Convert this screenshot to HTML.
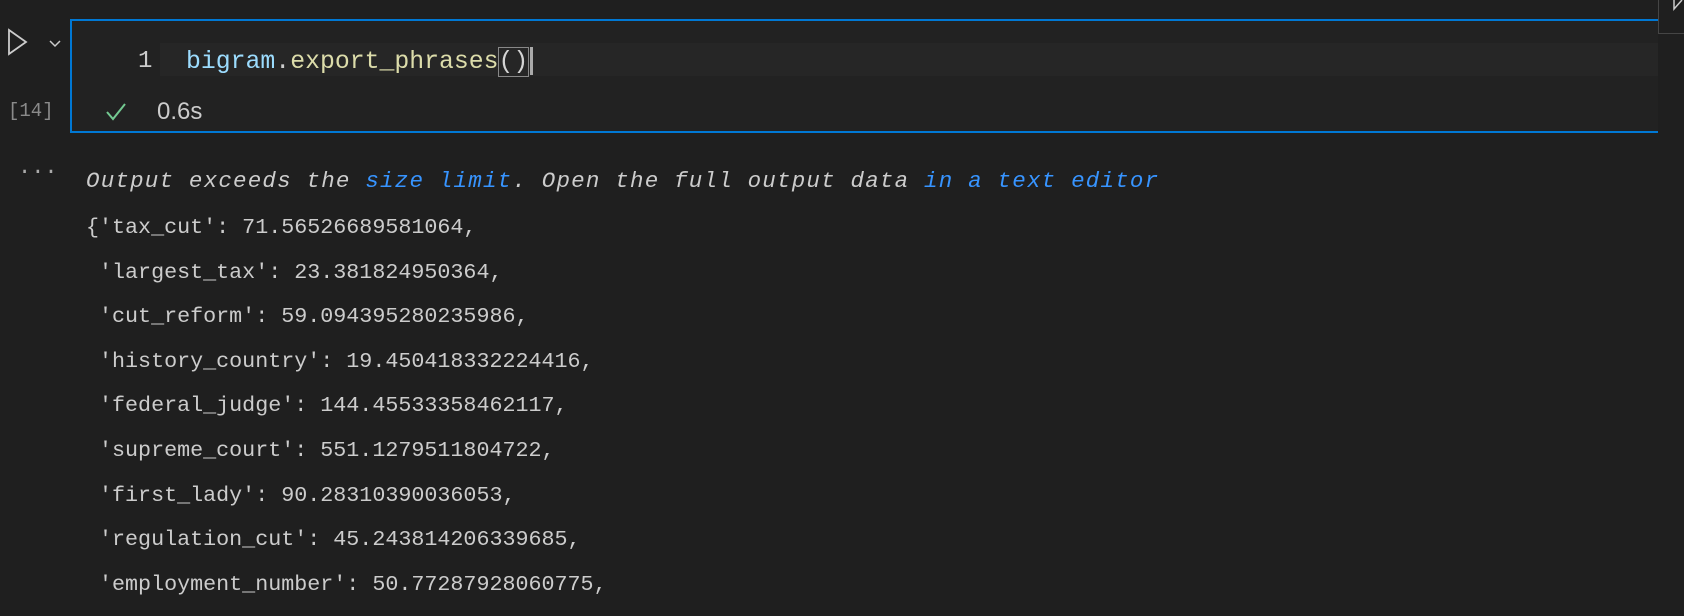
<!DOCTYPE html>
<html><head><style>
body{margin:0;width:1684px;height:616px;background:#1f1f1f;overflow:hidden;position:relative;font-family:"Liberation Sans",sans-serif;color:#ccc}
.a{position:absolute;white-space:pre}
.mono{font-family:"Liberation Mono",monospace}
</style></head><body>
<div class="a" style="left:1658px;top:-2px;width:28px;height:36px;border:1px solid #454545;box-sizing:border-box"></div>
<svg class="a" style="left:1672px;top:0" width="12" height="12"><path d="M2 0 L2 9 L10 0" fill="none" stroke="#ccc" stroke-width="1.5"/></svg>
<div class="a" style="left:70px;top:19px;width:1588px;height:114px;border:2px solid #0078d4;border-right:none;box-sizing:border-box;background:#222"></div>
<div class="a" style="left:160px;top:43px;width:1498px;height:33px;background:#262626"></div>
<svg class="a" style="left:6px;top:28px" width="60" height="30"><path d="M3 2 L3 26 L20 14 Z" fill="none" stroke="#ccc" stroke-width="1.8"/><path d="M44 13 L49 18 L54 13" fill="none" stroke="#ccc" stroke-width="1.5"/></svg>
<div class="a mono" style="left:8px;top:100px;font-size:19px;color:#8a8a8a">[14]</div>
<div class="a mono" style="left:18px;top:155px;font-size:22px;color:#aaa">...</div>
<div class="a mono" style="left:138px;top:48px;font-size:24px;color:#ccc">1</div>
<div class="a mono" style="left:186px;top:48px;font-size:24.8px;color:#dcdcaa"><span style="color:#9cdcfe">bigram</span><span style="color:#ccc">.</span>export_phrases<span style="color:#d4d4d4;outline:1px solid #888">()</span></div>
<div class="a" style="left:530px;top:47px;width:3px;height:28px;background:#aaa"></div>
<svg class="a" style="left:105px;top:101px" width="24" height="22"><path d="M2 11 L8 18 L20 3" fill="none" stroke="#73c991" stroke-width="2"/></svg>
<div class="a" style="left:157px;top:98px;font-size:24px;color:#ccc">0.6s</div>
<div class="a mono" style="left:86px;top:168px;font-size:22.5px;letter-spacing:1.2px;color:#ccc"><i>Output exceeds the <span style="color:#3794ff">size limit</span>. Open the full output data <span style="color:#3794ff">in a text editor</span></i></div>
<div class="a mono" style="left:86px;top:206px;font-size:21.7px;line-height:44.6px;color:#ccc">{'tax_cut': 71.56526689581064,
 'largest_tax': 23.381824950364,
 'cut_reform': 59.094395280235986,
 'history_country': 19.450418332224416,
 'federal_judge': 144.45533358462117,
 'supreme_court': 551.1279511804722,
 'first_lady': 90.28310390036053,
 'regulation_cut': 45.243814206339685,
 'employment_number': 50.77287928060775,</div>
</body></html>
